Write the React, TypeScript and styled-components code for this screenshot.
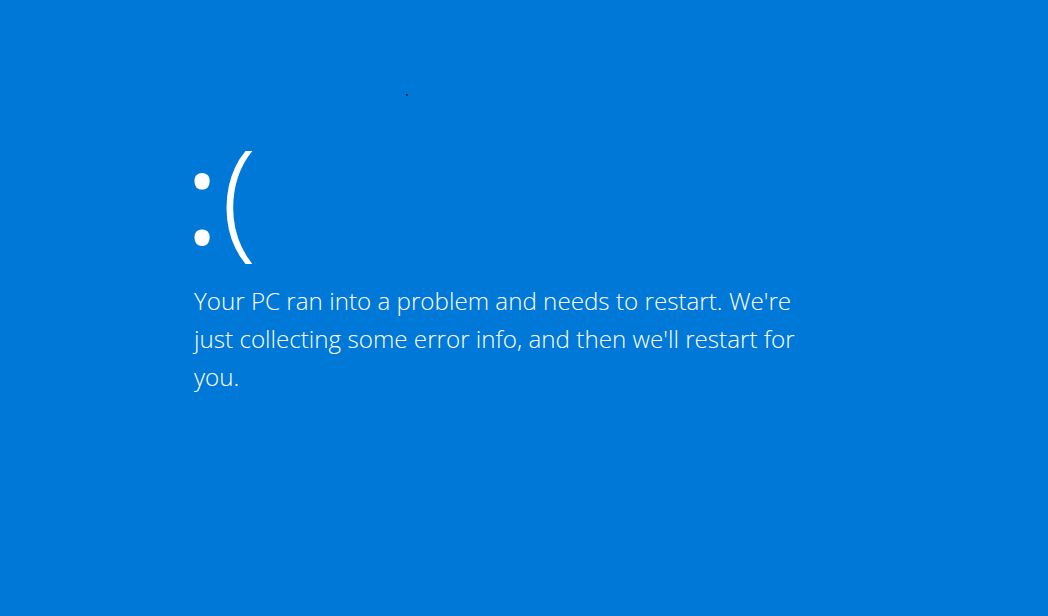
import React from "react";
import styled, { createGlobalStyle } from "styled-components";

const GlobalStyle = createGlobalStyle`
  html, body {
    margin: 0;
    padding: 0;
    background: #0078d7;
  }
`;

const Screen = styled.div`
  position: relative;
  width: 1048px;
  height: 616px;
  background: #0078d7;
  color: #ffffff;
  font-family: "Open Sans", "Noto Sans", sans-serif;
  overflow: hidden;
  display: flex;
  flex-direction: column;
  padding: 124px 0 0 185px;
  box-sizing: border-box;
`;

const Speck = styled.span`
  position: absolute;
  left: 406px;
  top: 94px;
  width: 2px;
  height: 2px;
  background: #0a2a55;
`;

const Face = styled.div`
  font-size: 130px;
  font-weight: 300;
  line-height: 140px;
  height: 140px;
  letter-spacing: 2px;
`;

const Colon = styled.span`
  font-weight: 500;
`;

const Message = styled.p`
  margin: 18px 0 0 9px;
  width: 620px;
  font-size: 24.2px;
  font-weight: 300;
  line-height: 38px;
`;

const App: React.FC = () => (
  <>
    <GlobalStyle />
    <Screen>
      <Speck />
      <Face>
        <Colon>:</Colon>(
      </Face>
      <Message>
        Your PC ran into a problem and needs to restart. We're just collecting some error info, and then we'll restart
        for you.
      </Message>
    </Screen>
  </>
);

export default App;
